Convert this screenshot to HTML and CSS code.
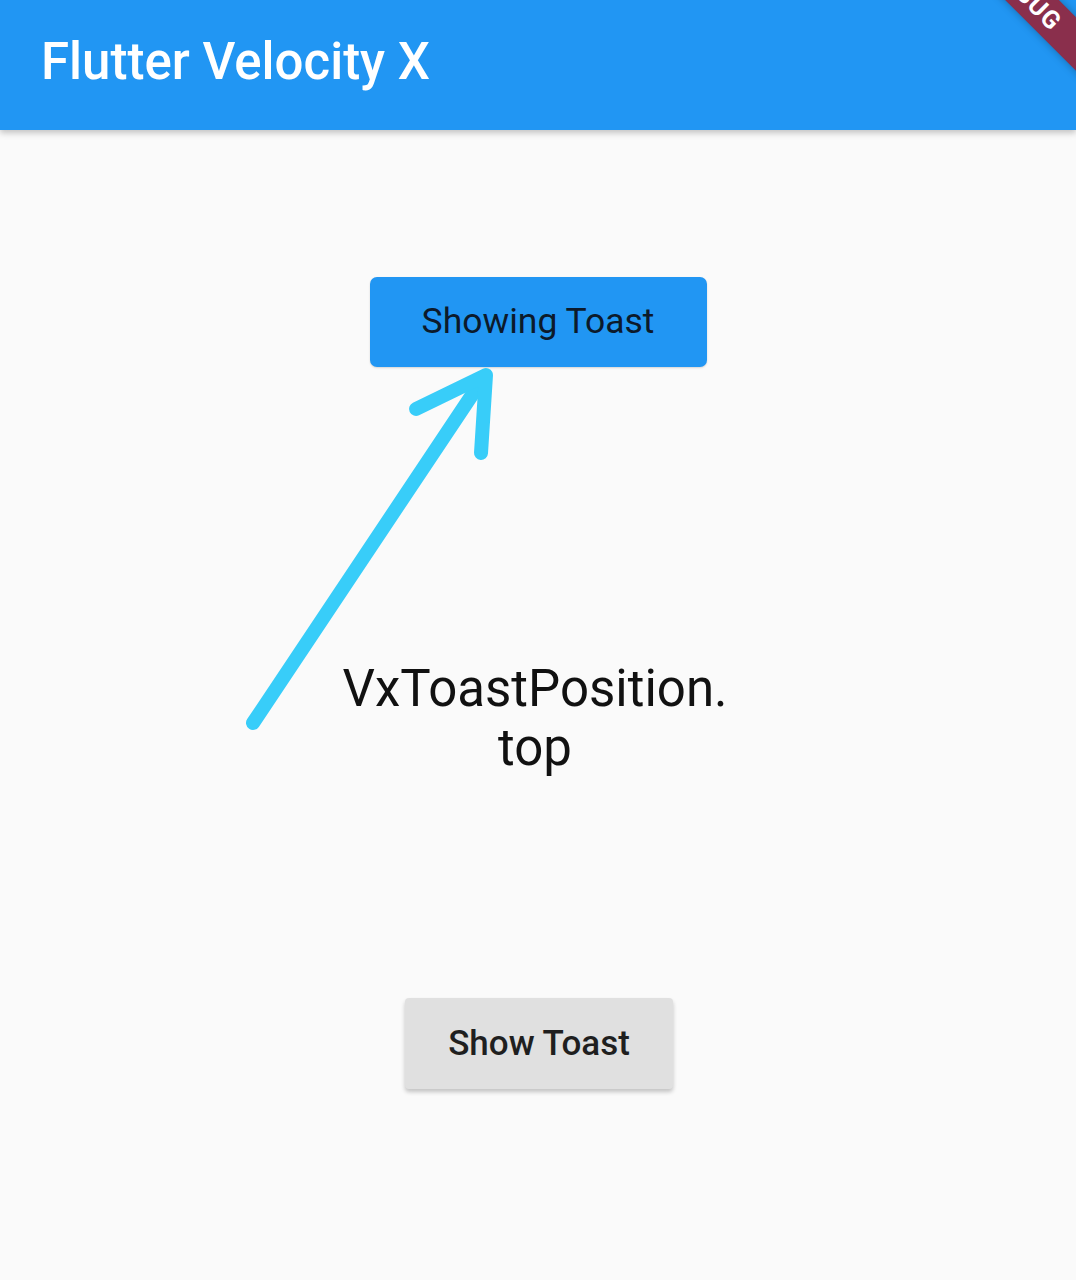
FILE: index.html
```html
<!DOCTYPE html>
<html>
<head>
<meta charset="utf-8">
<link rel="stylesheet" href="styles.css">
</head>
<body>
<header class="appbar">
  <h1 class="title">Flutter Velocity X</h1>
  <div class="debug-banner"><span>DEBUG</span></div>
</header>
<main class="content">
  <div class="toast">Showing Toast</div>
  <p class="label">VxToastPosition.<br>top</p>
  <button class="show-btn">Show Toast</button>
  <svg class="arrow" width="1076" height="1280" viewBox="0 0 1076 1280">
    <g fill="none" stroke="#38CDF9" stroke-width="14" stroke-linecap="round" stroke-linejoin="round">
      <path d="M253 723 L484 377"/>
      <path d="M416 409 L486 375 L481 453"/>
    </g>
  </svg>
</main>
</body>
</html>
```
FILE: styles.css
```css
html, body {
  margin: 0;
  padding: 0;
}
body {
  width: 1076px;
  height: 1280px;
  background: #fafafa;
  font-family: Roboto, "Noto Sans", sans-serif;
  overflow: hidden;
  position: relative;
}
.appbar {
  height: 130px;
  background: #2196F3;
  box-shadow: 0 3px 6px rgba(0,0,0,0.22);
  display: flex;
  align-items: center;
  padding-left: 41px;
  position: relative;
  overflow: hidden;
  z-index: 2;
}
.title {
  margin: 0;
  margin-top: -7px;
  color: #fff;
  font-size: 51px;
  font-weight: 500;
  letter-spacing: 0;
}
.debug-banner {
  position: absolute;
  top: -39px;
  right: -86px;
  width: 300px;
  height: 38px;
  background: #8a2f4c;
  transform: rotate(45deg);
  display: flex;
  align-items: center;
  justify-content: center;
  box-shadow: 0 0 8px rgba(0,0,0,0.3);
}
.debug-banner span {
  color: #fff;
  font-weight: 700;
  font-size: 25px;
  letter-spacing: 1px;
  transform: translateX(22px);
}
.content {
  display: flex;
  flex-direction: column;
  align-items: center;
}
.toast {
  margin-top: 147px;
  width: 337px;
  height: 90px;
  background: #2196F3;
  border-radius: 7px;
  color: #0c1a2b;
  font-size: 35.5px;
  display: flex;
  align-items: center;
  justify-content: center;
  box-shadow: 0 1px 2px rgba(0,0,0,0.15);
  box-sizing: border-box;
  padding-bottom: 2px;
}
.label {
  margin: 292px 6px 0 0;
  font-size: 51px;
  line-height: 59px;
  text-align: center;
  color: #111;
}
.show-btn {
  margin-top: 221px;
  margin-left: 2px;
  width: 268px;
  height: 91px;
  border: none;
  border-radius: 4px;
  background: #e0e0e0;
  color: #1f1f1f;
  font-family: Roboto, "Noto Sans", sans-serif;
  font-size: 35px;
  font-weight: 500;
  box-shadow: 0 3px 4px rgba(0,0,0,0.22);
  padding: 0;
}
.arrow {
  position: absolute;
  left: 0;
  top: 0;
  pointer-events: none;
}
```
